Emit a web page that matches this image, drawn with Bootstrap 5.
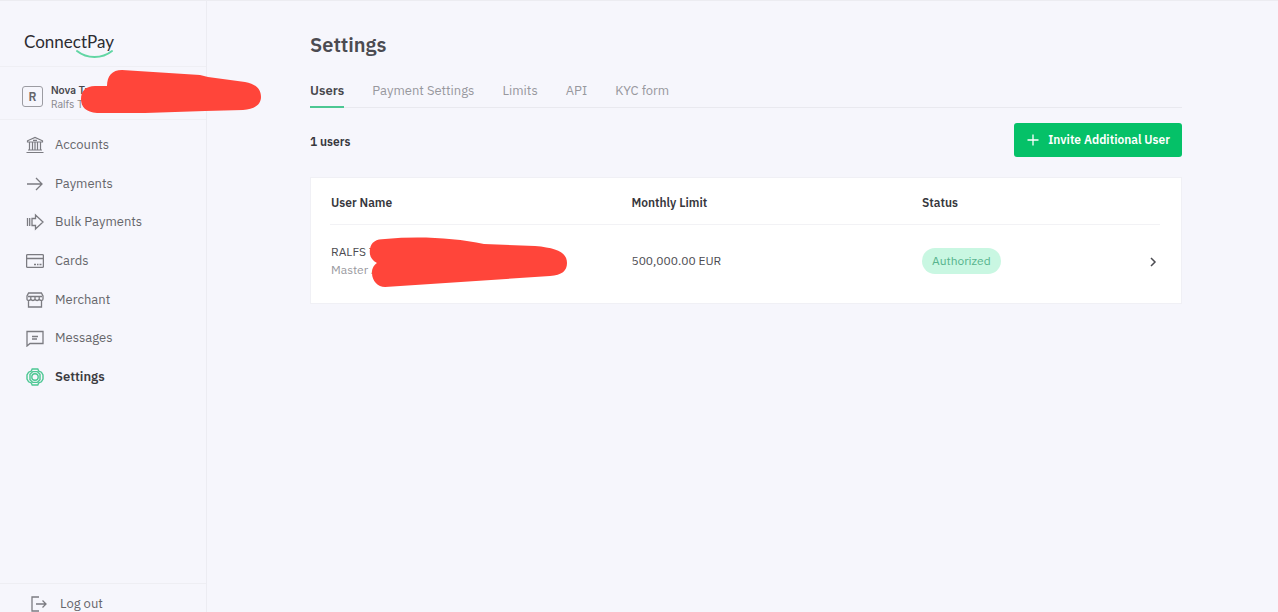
<!DOCTYPE html>
<html lang="en">
<head>
<meta charset="utf-8">
<meta name="viewport" content="width=device-width, initial-scale=1">
<title>ConnectPay – Settings</title>
<link href="https://cdn.jsdelivr.net/npm/bootstrap@5.3.0/dist/css/bootstrap.min.css" rel="stylesheet">
<style>
  body { background: #f6f6fc; color: #47474c; font-family: "IBM Plex Sans", "Noto Sans", sans-serif; font-size: 13px; line-height: 18px; }
  a { text-decoration: none; color: inherit; }
  svg { fill: none; stroke: currentColor; flex: none; }
  .shell { border-top: 1px solid #ececf1; }
  .sidebar { width: 207px; flex: none; border-right: 1px solid #ececf2; }
  .brand { height: 65px; padding: 30px 24px 0; font-family: Lato, sans-serif; font-size: 17px; color: #2c2c31; }
  .brand a { display: inline-block; height: 30px; position: relative; line-height: 22px; }
  .brand svg { position: absolute; right: 0; top: 18px; color: #62d6a4; }
  .account { height: 54px; border: solid #efeff4; border-width: 1px 0; padding: 7px 0 0 22px; gap: 8px; }
  .account-initial { width: 21px; height: 21px; border: 1px solid #9c9ca2; border-radius: 3px; font-size: 12px; font-weight: 600; line-height: 19px; color: #66666b; text-align: center; }
  .account-text { font-family: Inter, sans-serif; font-size: 10px; line-height: 14px; color: #8b8b91; }
  .account-text strong { font-weight: 600; color: #47474c; }
  .scribble { position: absolute; stroke: none; fill: #ff453a; z-index: 2; }
  .menu { display: grid; grid-auto-rows: 1fr; height: 270px; margin-top: 6px; }
  .menu a { gap: 11px; padding-left: 26px; color: #66666b; height: 100%; }
  .menu svg, .logout svg { color: #7b7b81; }
  .menu a.active { color: #3c3c41; font-weight: 600; }
  .menu a.active svg { color: #4cc793; }
  .logout { border-top: 1px solid #eeeef3; padding: 12px 0 0 31px; gap: 12px; line-height: 16px; color: #66666b; }
  .shell aside { margin-top: -1px; padding-top: 1px; }
  .content { padding: 32px 96px 0 103px; }
  h1 { font-size: 20px; line-height: 24px; font-weight: 600; color: #4b4b51; margin: 0 0 20px; }
  .tabs { border-bottom: 1px solid #e9e9ef; gap: 28px; height: 31px; }
  .tabs a { height: 31px; padding-top: 5px; color: #98989e; }
  .tabs a.active { color: #47474c; font-weight: 600; border-bottom: 2px solid #4cc793; }
  .toolbar { margin: 15px 0 20px; }
  .count { font-size: 12px; font-weight: 600; color: #37373c; padding-top: 3px; }
  .invite { background: #05c168; color: #fff; height: 34px; border-radius: 3px; font-size: 12px; font-weight: 600; padding: 0 12px 0 13px; gap: 9px; }
  .invite:hover { background: #04ad5d; color: #fff; }
  .panel { background: #fff; border: 1px solid #f0f0f5; padding: 5px 21px 5px 19px; }
  .users { width: 100%; table-layout: fixed; }
  .users th { height: 41px; font-size: 12px; font-weight: 600; color: #37373c; border-bottom: 1px solid #f2f2f5; }
  .users td { height: 74px; font-size: 12px; color: #4b4b51; }
  .c-name { width: 300px; } .c-limit { width: 35%; } .c-go { width: 24px; }
  .users .c-name { width: 36.2%; }
  .role { color: #98989e; }
  .status { background: #c9f7e2; color: #57b48d; border-radius: 13px; padding: 4px 10px; display: inline-block; }
</style>
</head>
<body>
<div class="shell d-flex min-vh-100">
  <aside class="sidebar d-flex flex-column vh-100 position-sticky top-0">
    <div class="brand"><a href="#">ConnectPay
      <svg width="39" height="10" viewBox="0 0 39 10" stroke-width="2" stroke-linecap="round"><path d="M2 2C12 10 27 10 37 2"/></svg></a></div>
    <div class="account d-flex align-items-center position-relative">
      <span class="account-initial">R</span>
      <div class="account-text"><strong>Nova Trad</strong><br>Ralfs T</div>
      <svg class="scribble" style="left:80px;top:2px" width="182" height="46" viewBox="80 69 182 46"><path d="M95 86H107C107 76 112 70 122 70L200 75L208 77L245 82C256 84 261 89 261 97C261 105 254 109 243 110L205 111L145 113H97C86 112 81 107 81 99C81 91 86 86 95 86Z"/></svg>
    </div>
    <nav class="menu">
      <a class="d-flex align-items-center" href="#"><svg width="18" height="18" viewBox="0 0 18 18" stroke-width="1.200"><path d="M1.500 6V4.800L9 1.400l7.500 3.400V6ZM3.500 6v8M6.500 6v8M9 6v8M11.500 6v8M14.500 6v8M2 14h14M.5 16.500h17M7 4.300h4"/></svg>Accounts</a>
      <a class="d-flex align-items-center" href="#"><svg width="18" height="18" viewBox="0 0 18 18" stroke-width="1.300"><path d="M1 9h15M10 3l6 6-6 6"/></svg>Payments</a>
      <a class="d-flex align-items-center" href="#"><svg width="18" height="18" viewBox="0 0 18 18" stroke-width="1.300"><path d="M1.500 5v8M3.700 5v8M6 5.500h3.500V2L17 9l-7.500 7v-3.500H6Z"/></svg>Bulk Payments</a>
      <a class="d-flex align-items-center" href="#"><svg width="18" height="18" viewBox="0 0 18 18" stroke-width="1.300"><rect x=".6" y="2.600" width="16.800" height="12.800" rx="1"/><path d="M1 6.500h16M8 12.500h2M11 12.500h1.500M13.500 12.500h2"/></svg>Cards</a>
      <a class="d-flex align-items-center" href="#"><svg width="18" height="18" viewBox="0 0 18 18" stroke-width="1.300"><path d="M2.600 2h12.800l1.600 3v3c0 2-3 2-3.800 0-.9 2-3.300 2-4.200 0-.9 2-3.300 2-4.200 0C4 10 1 10 1 8V5ZM2.500 9.500V16h13V9.500M2 5.500h14M4.800 5.500V8M9 5.500V8M13.200 5.500V8"/></svg>Merchant</a>
      <a class="d-flex align-items-center" href="#"><svg width="18" height="18" viewBox="0 0 18 18" stroke-width="1.300"><path d="M1 2.500h16v12H4L1 17ZM6 7.500h6M6 10h5"/></svg>Messages</a>
      <a class="d-flex align-items-center active" href="#" aria-current="page"><svg width="18" height="18" viewBox="0 0 18 18" stroke-width="1.400"><path d="M6.200 1h5.600l1 2.200 2.600 1L17 7v4l-1.600 2.800-2.600 1-1 2.200H6.200l-1-2.200-2.600-1L1 11V7l1.600-2.800 2.600-1Z"/><path d="M6.800 3.600h4.400L14 6.300v5.400l-2.800 2.700H6.800L4 11.700V6.300Z"/><circle cx="9" cy="9" r="3.200"/></svg>Settings</a>
    </nav>
    <a class="logout d-flex align-items-center mt-auto" href="#"><svg width="17" height="16" viewBox="0 0 17 16" stroke-width="1.300"><path d="M8 1H1v14h7M5 8h10M11.500 4.500 15 8l-3.500 3.500"/></svg>Log out</a>
  </aside>

  <main class="content flex-grow-1">
    <h1>Settings</h1>
    <nav class="tabs d-flex">
      <a class="active" href="#" aria-current="page">Users</a>
      <a href="#">Payment Settings</a>
      <a href="#">Limits</a>
      <a href="#">API</a>
      <a href="#">KYC form</a>
    </nav>
    <div class="toolbar d-flex justify-content-between align-items-center">
      <span class="count">1 users</span>
      <button type="button" class="btn border-0 invite d-flex align-items-center"><svg width="12" height="12" viewBox="0 0 12 12" stroke-width="1.300"><path d="M6 .5v11M.5 6h11"/></svg>Invite Additional User</button>
    </div>
    <section class="panel">
      <table class="users">
        <thead><tr><th class="c-name" scope="col">User Name</th><th class="c-limit" scope="col">Monthly Limit</th><th scope="col">Status</th><th class="c-go"></th></tr></thead>
        <tbody><tr>
          <td class="position-relative">RALFS T<br><span class="role">Master A</span>
            <svg class="scribble" style="left:39px;top:11px" width="199" height="52" viewBox="369 235 199 52"><path d="M377 262C371 259 369 254 370 248C371 241 376 238 385 238C420 235 455 237 484 243L535 245C558 247 567 252 567 262C567 270 562 274 550 275L385 286C378 286 372 280 372 272C372 267 374 264 377 262Z"/></svg></td>
          <td>500,000.00 EUR</td>
          <td><span class="status">Authorized</span></td>
          <td class="text-end"><a href="#" aria-label="Open user"><svg width="12" height="12" viewBox="0 0 12 12" stroke-width="1.500"><path d="m4 2 4 4-4 4"/></svg></a></td>
        </tr></tbody>
      </table>
    </section>
  </main>
</div>
<script src="https://cdn.jsdelivr.net/npm/bootstrap@5.3.0/dist/js/bootstrap.bundle.min.js"></script>
</body>
</html>
